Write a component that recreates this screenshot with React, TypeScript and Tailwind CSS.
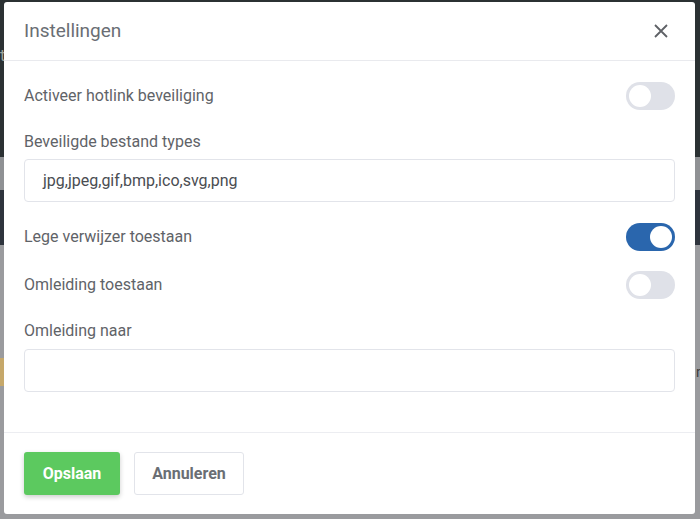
import React from "react";

function Toggle({ on }: { on: boolean }) {
  return (
    <div
      className={
        "relative h-[28px] w-[49px] rounded-full " +
        (on ? "bg-[#2a66ad]" : "bg-[#dfe1e8]")
      }
    >
      <div
        className={
          "absolute top-[3px] h-[22px] w-[22px] rounded-full bg-white " +
          (on ? "left-[24px]" : "left-[3px]")
        }
      />
    </div>
  );
}

export default function App() {
  return (
    <div className="relative h-[519px] w-[700px] overflow-hidden font-['Roboto',sans-serif]">
      <div className="flex h-full w-full flex-col">
        <div className="h-[157px] bg-[#2b3133]" />
        <div className="h-[33px] bg-[#8f9194]" />
        <div className="h-[55px] bg-[#2e343d]" />
        <div className="flex-1 bg-[#9a9b9e]" />
      </div>
      <div className="absolute left-0 top-[44px] text-[16px] text-[#9ea39a]">t</div>
      <div className="absolute left-0 top-[358px] h-[28px] w-[4px] bg-[#c6a86a]" />
      <div className="absolute left-[696px] top-[362px] text-[14px] text-[#3a3a3a]">n</div>
      <div className="absolute left-[4px] top-[2px] flex h-[512px] w-[691px] flex-col rounded-[3px] bg-white">
        <div className="flex h-[59px] items-center justify-between border-b border-[#e9eaee] pl-[20px] pr-[27px]">
          <span className="text-[19px] text-[#6a6e74]">Instellingen</span>
          <svg width="14" height="14" viewBox="0 0 14 14" className="text-[#5e6166]">
            <path d="M1 1L13 13M13 1L1 13" stroke="currentColor" strokeWidth="1.8" />
          </svg>
        </div>
        <div className="flex flex-col px-[20px] pt-[21px]">
          <div className="flex h-[28px] items-center justify-between">
            <span className="text-[16px] text-[#5f6368]">Activeer hotlink beveiliging</span>
            <Toggle on={false} />
          </div>
          <div className="mt-[21px] text-[16px] leading-[22px] text-[#5f6368]">
            Beveiligde bestand types
          </div>
          <div className="mt-[6px] flex h-[43px] items-center rounded-[4px] border border-[#e2e4ea] px-[18px] text-[16px] text-[#4a4d52]">
            jpg,jpeg,gif,bmp,ico,svg,png
          </div>
          <div className="mt-[21px] flex h-[28px] items-center justify-between">
            <span className="text-[16px] text-[#5f6368]">Lege verwijzer toestaan</span>
            <Toggle on={true} />
          </div>
          <div className="mt-[20px] flex h-[28px] items-center justify-between">
            <span className="text-[16px] text-[#5f6368]">Omleiding toestaan</span>
            <Toggle on={false} />
          </div>
          <div className="mt-[21px] text-[16px] leading-[22px] text-[#5f6368]">Omleiding naar</div>
          <div className="mt-[7px] h-[43px] rounded-[4px] border border-[#e2e4ea]" />
        </div>
        <div className="mt-[40px] flex gap-[14px] border-t border-[#ecedf1] px-[20px] pt-[19px]">
          <button className="h-[43px] w-[96px] rounded-[3px] bg-[#5cc95f] text-[16px] font-bold text-white shadow-[0_2px_5px_rgba(0,0,0,0.2)]">
            Opslaan
          </button>
          <button className="h-[43px] w-[110px] rounded-[3px] border border-[#e2e4ea] bg-white text-[16px] font-bold text-[#6a6e74]">
            Annuleren
          </button>
        </div>
      </div>
    </div>
  );
}
